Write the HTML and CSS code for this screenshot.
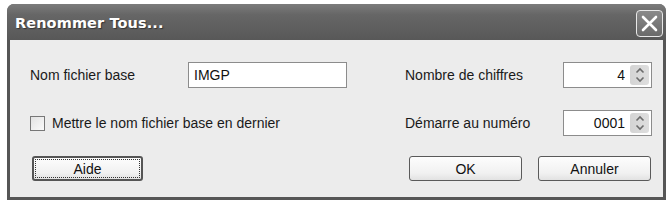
FILE: index.html
```html
<!DOCTYPE html>
<html lang="fr">
<head>
  <meta charset="UTF-8" />
  <title>Renommer Tous</title>
  <link rel="stylesheet" href="styles.css">
</head>
<body>

  <div class="fenetre">
    <div class="titre">
      <span class="titre-texte">Renommer Tous...</span>
      <button class="fermer" aria-label="Fermer">
        <svg width="17" height="17" viewBox="0 0 17 17">
          <path d="M2 2 L15 15 M15 2 L2 15" stroke="#fff" stroke-width="2.6" stroke-linecap="round"/>
        </svg>
      </button>
    </div>

    <div class="contenu">
      <div class="ligne">
        <div class="gauche">
          <label class="lbl" for="base">Nom fichier base</label>
          <input class="champ" type="text" id="base" value="IMGP">
        </div>
        <div class="droite">
          <label class="lbl" for="chiffres">Nombre de chiffres</label>
          <div class="spin">
            <input type="text" id="chiffres" value="4">
            <div class="fleches">
              <svg width="12" height="20" viewBox="0 0 12 20">
                <path d="M2.5 7.5 L6 4 L9.5 7.5 M2.5 12.5 L6 16 L9.5 12.5" fill="none" stroke="#6c6c6c" stroke-width="1.6"/>
              </svg>
            </div>
          </div>
        </div>
      </div>

      <div class="ligne">
        <div class="gauche">
          <label class="case">
            <span class="boite"></span>
            Mettre le nom fichier base en dernier
          </label>
        </div>
        <div class="droite">
          <label class="lbl" for="numero">Démarre au numéro</label>
          <div class="spin">
            <input type="text" id="numero" value="0001">
            <div class="fleches">
              <svg width="12" height="20" viewBox="0 0 12 20">
                <path d="M2.5 7.5 L6 4 L9.5 7.5 M2.5 12.5 L6 16 L9.5 12.5" fill="none" stroke="#6c6c6c" stroke-width="1.6"/>
              </svg>
            </div>
          </div>
        </div>
      </div>

      <div class="ligne boutons">
        <button class="btn btn-defaut"><span>Aide</span></button>
        <div class="btn-groupe">
          <button class="btn"><span>OK</span></button>
          <button class="btn"><span>Annuler</span></button>
        </div>
      </div>
    </div>
  </div>

</body>
</html>
```

FILE: styles.css
```css
* {
  margin: 0;
  padding: 0;
  box-sizing: border-box;
  font-family: 'Liberation Sans', Arial, sans-serif;
}

body {
  background: #fff;
  color: #111;
}

.fenetre {
  margin: 4px 5px 0 7px;
  width: 659px;
  height: 196px;
  background: #565656;
  border-radius: 7px 7px 0 0;
  padding: 0 3px 3px 3px;
  display: flex;
  flex-direction: column;
}

.titre {
  height: 36px;
  display: flex;
  align-items: center;
  justify-content: space-between;
  background: linear-gradient(#7c7c7c, #666 30%, #5e5e5e 70%, #585858);
  border-radius: 7px 7px 0 0;
  margin: 0 -3px;
  padding-left: 8px;
  padding-right: 3px;
}

.titre-texte {
  color: #fff;
  font-family: 'DejaVu Sans', sans-serif;
  font-weight: bold;
  font-size: 14.5px;
  letter-spacing: 0.1px;
  text-shadow: 1px 1px 1px #333;
  padding-top: 2px;
}

.fermer {
  width: 27px;
  height: 27px;
  border: 1.5px solid #e8e8e8;
  border-radius: 4px;
  background: linear-gradient(#8a8a8a, #6a6a6a);
  display: flex;
  align-items: center;
  justify-content: center;
  margin-top: 2px;
}

.contenu {
  flex: 1;
  background: #ececec;
  padding: 22px 11px 0 20px;
  display: flex;
  flex-direction: column;
  gap: 22px;
}

.ligne {
  display: flex;
  justify-content: space-between;
  align-items: center;
  height: 26px;
}

.gauche,
.droite {
  display: flex;
  align-items: center;
}

.lbl,
.case {
  font-size: 14px;
  color: #1a1a1a;
}

.gauche .lbl,
.droite .lbl {
  width: 158px;
}

.champ {
  width: 159px;
  height: 26px;
  border: 1px solid #8c8c8c;
  background: #fff;
  padding: 0 5px;
  font-size: 14px;
  color: #111;
}

.case {
  display: flex;
  align-items: center;
  gap: 7px;
}

.boite {
  width: 15px;
  height: 15px;
  border: 1px solid #777;
  background: linear-gradient(135deg, #e2e2e2, #fafafa);
}

.spin {
  width: 89px;
  height: 26px;
  border: 1px solid #8c8c8c;
  background: #fff;
  display: flex;
  align-items: center;
  padding: 2px;
}

.spin input {
  flex: 1;
  min-width: 0;
  border: none;
  text-align: right;
  font-size: 14px;
  padding-right: 5px;
  background: transparent;
  color: #111;
}

.fleches {
  width: 19px;
  height: 20px;
  border-radius: 3px;
  background: linear-gradient(90deg, #d4d4d4, #dedede);
  display: flex;
  align-items: center;
  justify-content: center;
}

.boutons {
  height: 25px;
  margin-top: -2px;
}

.btn-groupe {
  display: flex;
  gap: 16px;
  margin-right: 1px;
}

.btn {
  width: 113px;
  height: 25px;
  border: 1px solid #5a5a5a;
  border-radius: 3px;
  background: linear-gradient(#fdfdfd, #f1f1f1 70%, #e2e2e2);
  font-size: 14px;
  color: #111;
  display: flex;
  align-items: center;
  justify-content: center;
}

.btn-defaut {
  width: 111px;
  margin-left: 2px;
  border: 2px solid #555;
  padding: 1px;
}

.btn-defaut span {
  flex: 1;
  align-self: stretch;
  display: flex;
  align-items: center;
  justify-content: center;
  border: 1px dotted #333;
}
```
